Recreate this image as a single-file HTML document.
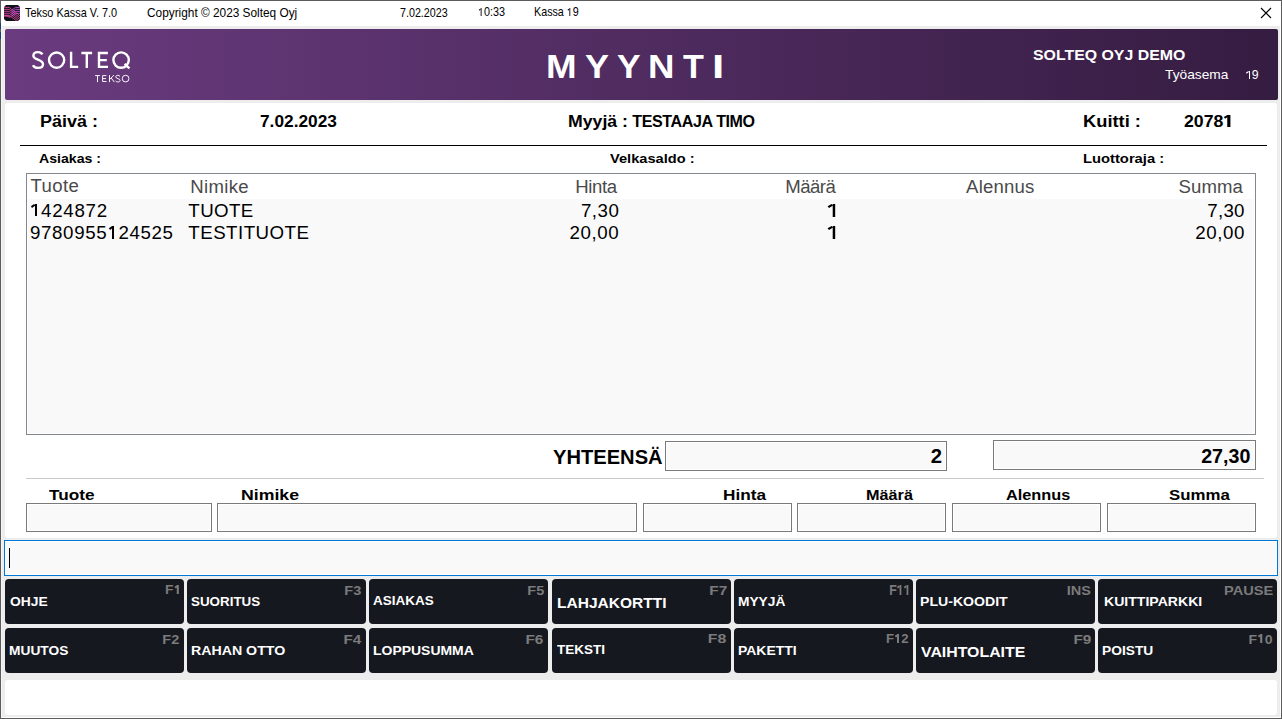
<!DOCTYPE html>
<html><head><meta charset="utf-8"><style>
html,body{margin:0;padding:0;width:1282px;height:719px;overflow:hidden;background:#fff}
.t{position:absolute;white-space:nowrap;line-height:1;font-family:"Liberation Sans",sans-serif;color:#000}
.o1{position:relative;-webkit-text-fill-color:transparent}
.o1::after{content:"";position:absolute;left:0.257em;width:0.096em;top:0.217em;height:0.688em;background:currentColor}
.o1::before{content:"";position:absolute;left:0.08em;width:0.205em;top:0.282em;height:0.09em;background:currentColor;transform:rotate(-35deg)}
.o1b{position:relative;-webkit-text-fill-color:transparent}
.o1b::after{content:"";position:absolute;left:0.222em;width:0.16em;top:0.217em;height:0.688em;background:currentColor}
.o1b::before{content:"";position:absolute;left:0.05em;width:0.21em;top:0.272em;height:0.115em;background:currentColor;transform:rotate(-33deg)}
</style></head><body>
<div style="position:absolute;left:0px;top:0px;width:1282px;height:719px;background:#fff;box-sizing:border-box;border:1px solid #5c5c5c;"></div>
<div style="position:absolute;left:0px;top:23px;width:1px;height:6px;background:#173d6e;"></div>
<div style="position:absolute;left:0px;top:32px;width:1px;height:7px;background:#173d6e;"></div>
<div style="position:absolute;left:1px;top:26px;width:1px;height:691px;background:#f5f5f5;"></div>
<div style="position:absolute;left:2px;top:26px;width:1278px;height:691px;background:#ededed;"></div>
<div style="position:absolute;left:5px;top:29px;width:1273px;height:71px;background:linear-gradient(to right,#6a3b7f,#351c41);border-radius:2px;"></div>
<div style="position:absolute;left:5px;top:103px;width:1272px;height:435px;background:#fff;border-radius:3px;"></div>
<div style="position:absolute;left:20px;top:145px;width:1247px;height:1px;background:#000;"></div>
<div style="position:absolute;left:26px;top:173px;width:1230px;height:262px;background:#f9f9f9;box-sizing:border-box;border:1px solid #828790;box-shadow:inset 0 0 0 1px #fff;"></div>
<div style="position:absolute;left:27px;top:174px;width:1228px;height:25px;background:#fff;"></div>
<div style="position:absolute;left:665px;top:441px;width:282px;height:30px;background:#f9f9f9;box-sizing:border-box;border:1px solid #7a7a7a;box-shadow:inset 0 0 0 1px #fff;"></div>
<div style="position:absolute;left:993px;top:440px;width:263px;height:30px;background:#f9f9f9;box-sizing:border-box;border:1px solid #7a7a7a;box-shadow:inset 0 0 0 1px #fff;"></div>
<div style="position:absolute;left:26px;top:478px;width:1238px;height:1px;background:#c8c8c8;"></div>
<div style="position:absolute;left:26px;top:503px;width:186px;height:29px;background:#f9f9f9;box-sizing:border-box;border:1px solid #7a7a7a;box-shadow:inset 0 0 0 1px #fff;"></div>
<div style="position:absolute;left:217px;top:503px;width:420px;height:29px;background:#f9f9f9;box-sizing:border-box;border:1px solid #7a7a7a;box-shadow:inset 0 0 0 1px #fff;"></div>
<div style="position:absolute;left:643px;top:503px;width:149px;height:29px;background:#f9f9f9;box-sizing:border-box;border:1px solid #7a7a7a;box-shadow:inset 0 0 0 1px #fff;"></div>
<div style="position:absolute;left:797px;top:503px;width:149px;height:29px;background:#f9f9f9;box-sizing:border-box;border:1px solid #7a7a7a;box-shadow:inset 0 0 0 1px #fff;"></div>
<div style="position:absolute;left:952px;top:503px;width:149px;height:29px;background:#f9f9f9;box-sizing:border-box;border:1px solid #7a7a7a;box-shadow:inset 0 0 0 1px #fff;"></div>
<div style="position:absolute;left:1107px;top:503px;width:149px;height:29px;background:#f9f9f9;box-sizing:border-box;border:1px solid #7a7a7a;box-shadow:inset 0 0 0 1px #fff;"></div>
<div style="position:absolute;left:4px;top:540px;width:1274px;height:36px;background:#f9f9f9;box-sizing:border-box;border:1px solid #0078d7;box-shadow:inset 0 0 0 1px #fff;"></div>
<div style="position:absolute;left:9px;top:548px;width:1px;height:20px;background:#000;"></div>
<div style="position:absolute;left:5px;top:579px;width:179px;height:45px;background:#161820;border-radius:4px;"></div>
<div style="position:absolute;left:187px;top:579px;width:179px;height:45px;background:#161820;border-radius:4px;"></div>
<div style="position:absolute;left:369px;top:579px;width:179px;height:45px;background:#161820;border-radius:4px;"></div>
<div style="position:absolute;left:552px;top:579px;width:179px;height:45px;background:#161820;border-radius:4px;"></div>
<div style="position:absolute;left:734px;top:579px;width:179px;height:45px;background:#161820;border-radius:4px;"></div>
<div style="position:absolute;left:916px;top:579px;width:179px;height:45px;background:#161820;border-radius:4px;"></div>
<div style="position:absolute;left:1098px;top:579px;width:179px;height:45px;background:#161820;border-radius:4px;"></div>
<div style="position:absolute;left:5px;top:628px;width:179px;height:45px;background:#161820;border-radius:4px;"></div>
<div style="position:absolute;left:187px;top:628px;width:179px;height:45px;background:#161820;border-radius:4px;"></div>
<div style="position:absolute;left:369px;top:628px;width:179px;height:45px;background:#161820;border-radius:4px;"></div>
<div style="position:absolute;left:552px;top:628px;width:179px;height:45px;background:#161820;border-radius:4px;"></div>
<div style="position:absolute;left:734px;top:628px;width:179px;height:45px;background:#161820;border-radius:4px;"></div>
<div style="position:absolute;left:916px;top:628px;width:179px;height:45px;background:#161820;border-radius:4px;"></div>
<div style="position:absolute;left:1098px;top:628px;width:179px;height:45px;background:#161820;border-radius:4px;"></div>
<div style="position:absolute;left:5px;top:680px;width:1272px;height:35px;background:#fff;border-radius:3px;"></div>
<svg style="position:absolute;left:4px;top:5px" width="16" height="16" viewBox="0 0 16 16">
<defs><clipPath id="ic"><path d="M2 0 H14 L16 2 V14 L14 16 H2 L0 14 V2 Z"/></clipPath></defs>
<path d="M2 0 H14 L16 2 V14 L14 16 H2 L0 14 V2 Z" fill="#101218"/>
<g fill="none" stroke-width="0.85" clip-path="url(#ic)">
<path d="M-1 2.40 H5.2 L17 11.60" stroke="#e24ca6"/>
<path d="M-1 4.35 H5.2 L17 13.55" stroke="#e24ca6"/>
<path d="M-1 6.30 H5.2 L17 15.50" stroke="#e24ca6"/>
<path d="M-1 8.25 H5.2 L17 17.45" stroke="#e24ca6"/>
<path d="M-1 10.20 H5.2 L17 19.40" stroke="#e24ca6"/>
<path d="M17 2.40 H11.5 L7.5 5.40" stroke="#cf55e2"/>
<path d="M17 4.35 H11.5 L7.5 7.35" stroke="#cf55e2"/>
<path d="M17 6.30 H11.5 L7.5 9.30" stroke="#cf55e2"/>
<path d="M17 8.25 H11.5 L7.5 11.25" stroke="#cf55e2"/>
<path d="M-1 11 C2 10.6 4.5 11 6.5 12.2" stroke="#e24ca6" stroke-width="1.6" opacity="0.7"/>
</g>
</svg>
<svg style="position:absolute;left:1260px;top:7px" width="12" height="12" viewBox="0 0 12 12"><path d="M1 1L11 11M11 1L1 11" stroke="#000" stroke-width="1.1" fill="none"/></svg>
<svg style="position:absolute;left:30px;top:49px" width="104" height="36" viewBox="30 49 104 36">
<g fill="none" stroke="#fff" stroke-width="2.4">
<path d="M42.4 54.3 C41.5 52.8 39.9 52.1 38 52.1 C35.3 52.1 33.4 53.5 33.4 55.7 C33.4 60.4 43 58.7 43 64.2 C43 66.6 40.9 67.9 38.1 67.9 C35.6 67.9 33.8 66.9 33 65.2"/>
<circle cx="56.6" cy="60.1" r="7.6"/>
<path d="M71.1 51.8 V66.9 H78.2"/>
<path d="M81.4 53 H92.1 M86.8 53 V68"/>
<path d="M107.9 53 H99 V66.9 H108 M99 60.1 H106.8"/>
<circle cx="121.1" cy="60.1" r="7.7"/>
<path d="M124.6 63.8 L129.4 68.3"/>
</g>
<g fill="none" stroke="#fff" stroke-width="0.95">
<path d="M95.1 75.6 H99.9 M97.5 75.6 V82.1"/>
<path d="M106.4 75.6 H102.6 V81.5 H106.5 M102.6 78.6 H106"/>
<path d="M109.5 75.1 V82.1 M114 75.1 L109.7 79.4 M111.2 78 L114.3 82.1"/>
<path d="M120 76.5 C119.5 75.7 118.7 75.3 117.8 75.3 C116.6 75.3 115.8 76 115.8 76.9 C115.8 79.1 120.1 78.2 120.1 80.4 C120.1 81.4 119.2 82 117.9 82 C116.8 82 115.9 81.5 115.5 80.7"/>
<circle cx="125.6" cy="78.6" r="3.35"/>
</g>
</svg>
<span class="t" style="font-size:12.150px;top:6.644px;left:24.72px;transform:scaleX(0.8961);transform-origin:left;">Tekso Kassa V. 7.0</span>
<span class="t" style="font-size:12.150px;top:6.926px;left:147.22px;transform:scaleX(0.9752);transform-origin:left;">Copyright © 2023 Solteq Oyj</span>
<span class="t" style="font-size:12.150px;top:7.314px;left:399.68px;transform:scaleX(0.8830);transform-origin:left;">7.02.2023</span>
<span class="t" style="font-size:12.150px;top:6.455px;left:477.57px;transform:scaleX(0.8897);transform-origin:left;"><span class="o1">1</span>0:33</span>
<span class="t" style="font-size:12.150px;top:6.483px;left:534.43px;transform:scaleX(0.8845);transform-origin:left;">Kassa <span class="o1">1</span>9</span>
<span class="t" style="font-size:32.998px;top:49.944px;left:546.02px;font-weight:700;color:#fff;transform:scaleX(1.1139);transform-origin:left;">M</span>
<span class="t" style="font-size:32.998px;top:49.944px;left:585.39px;font-weight:700;color:#fff;transform:scaleX(1.0900);transform-origin:left;">Y</span>
<span class="t" style="font-size:32.998px;top:49.944px;left:617.38px;font-weight:700;color:#fff;transform:scaleX(1.0714);transform-origin:left;">Y</span>
<span class="t" style="font-size:32.998px;top:49.944px;left:648.32px;font-weight:700;color:#fff;transform:scaleX(1.1109);transform-origin:left;">N</span>
<span class="t" style="font-size:32.998px;top:49.944px;left:683.13px;font-weight:700;color:#fff;transform:scaleX(1.0350);transform-origin:left;">T</span>
<span class="t" style="font-size:32.998px;top:49.944px;left:711.94px;font-weight:700;color:#fff;transform:scaleX(1.3400);transform-origin:left;">I</span>
<span class="t" style="font-size:14.907px;top:48.267px;left:1032.68px;font-weight:700;color:#fff;transform:scaleX(1.0663);transform-origin:left;">SOLTEQ OYJ DEMO</span>
<span class="t" style="font-size:12.290px;top:69.090px;left:1165.30px;color:#fff;transform:scaleX(1.1205);transform-origin:left;">Työasema</span>
<span class="t" style="font-size:12.290px;top:69.267px;letter-spacing:-0.400px;left:1245.39px;color:#fff;"><span class="o1">1</span>9</span>
<span class="t" style="font-size:16.760px;top:113.813px;left:39.58px;font-weight:700;transform:scaleX(1.0720);transform-origin:left;">Päivä :</span>
<span class="t" style="font-size:16.760px;top:113.813px;left:260.26px;font-weight:700;transform:scaleX(1.0315);transform-origin:left;">7.02.2023</span>
<span class="t" style="font-size:16.060px;top:113.404px;left:567.80px;font-weight:700;transform:scaleX(1.1019);transform-origin:left;">Myyjä :</span>
<span class="t" style="font-size:16.060px;top:113.388px;letter-spacing:-0.400px;left:632.37px;font-weight:700;">TESTAAJA TIMO</span>
<span class="t" style="font-size:16.760px;top:113.813px;left:1083.44px;font-weight:700;transform:scaleX(1.0918);transform-origin:left;">Kuitti :</span>
<span class="t" style="font-size:16.760px;top:113.813px;left:1184.26px;font-weight:700;transform:scaleX(1.0550);transform-origin:left;">2078<span class="o1b">1</span></span>
<span class="t" style="font-size:12.150px;top:153.199px;left:39.19px;font-weight:700;transform:scaleX(1.1633);transform-origin:left;">Asiakas :</span>
<span class="t" style="font-size:12.150px;top:153.414px;left:609.82px;font-weight:700;transform:scaleX(1.2043);transform-origin:left;">Velkasaldo :</span>
<span class="t" style="font-size:12.150px;top:153.414px;left:1083.29px;font-weight:700;transform:scaleX(1.2154);transform-origin:left;">Luottoraja :</span>
<span class="t" style="font-size:18.580px;top:177.441px;letter-spacing:0.376px;left:30.59px;color:#4a4a4a;">Tuote</span>
<span class="t" style="font-size:18.580px;top:177.645px;letter-spacing:0.300px;left:190.35px;color:#4a4a4a;">Nimike</span>
<span class="t" style="font-size:18.580px;top:177.645px;letter-spacing:-0.400px;left:575.27px;color:#4a4a4a;">Hinta</span>
<span class="t" style="font-size:18.580px;top:177.645px;letter-spacing:-0.550px;left:785.35px;color:#4a4a4a;">Määrä</span>
<span class="t" style="font-size:18.580px;top:177.660px;letter-spacing:0.192px;left:966.08px;color:#4a4a4a;">Alennus</span>
<span class="t" style="font-size:18.580px;top:177.641px;letter-spacing:0.106px;left:1178.47px;color:#4a4a4a;">Summa</span>
<span class="t" style="font-size:18.720px;top:201.530px;letter-spacing:0.734px;left:29.91px;"><span class="o1">1</span>424872</span>
<span class="t" style="font-size:18.720px;top:201.558px;letter-spacing:0.375px;left:188.34px;">TUOTE</span>
<span class="t" style="font-size:18.720px;top:201.518px;letter-spacing:0.467px;right:662.72px;">7,30</span>
<span class="t" style="font-size:18.720px;top:201.656px;right:442.29px;transform:scaleX(1.2385);transform-origin:right;"><span class="o1">1</span></span>
<span class="t" style="font-size:18.720px;top:201.593px;letter-spacing:0.300px;right:37.19px;">7,30</span>
<span class="t" style="font-size:18.720px;top:223.597px;letter-spacing:0.651px;left:29.95px;">9780955<span class="o1">1</span>24525</span>
<span class="t" style="font-size:18.720px;top:223.558px;letter-spacing:0.472px;left:188.34px;">TESTITUOTE</span>
<span class="t" style="font-size:18.720px;top:223.569px;letter-spacing:0.625px;right:662.62px;">20,00</span>
<span class="t" style="font-size:18.720px;top:223.656px;right:442.29px;transform:scaleX(1.2385);transform-origin:right;"><span class="o1">1</span></span>
<span class="t" style="font-size:18.720px;top:223.593px;letter-spacing:0.625px;right:36.86px;">20,00</span>
<span class="t" style="font-size:19.550px;top:448.448px;left:552.84px;font-weight:700;transform:scaleX(1.0305);transform-origin:left;">YHTEENSÄ</span>
<span class="t" style="font-size:20.250px;top:446.057px;right:340.11px;font-weight:700;">2</span>
<span class="t" style="font-size:20.110px;top:445.575px;right:31.52px;font-weight:700;transform:scaleX(0.9768);transform-origin:right;">27,30</span>
<span class="t" style="font-size:14.604px;top:488.132px;left:49.04px;font-weight:700;transform:scaleX(1.1789);transform-origin:left;">Tuote</span>
<span class="t" style="font-size:14.604px;top:488.132px;left:240.74px;font-weight:700;transform:scaleX(1.2133);transform-origin:left;">Nimike</span>
<span class="t" style="font-size:14.604px;top:488.132px;left:723.16px;font-weight:700;transform:scaleX(1.1781);transform-origin:left;">Hinta</span>
<span class="t" style="font-size:14.604px;top:488.132px;left:865.59px;font-weight:700;transform:scaleX(1.1122);transform-origin:left;">Määrä</span>
<span class="t" style="font-size:14.604px;top:488.132px;left:1005.62px;font-weight:700;transform:scaleX(1.1161);transform-origin:left;">Alennus</span>
<span class="t" style="font-size:14.604px;top:488.132px;left:1168.98px;font-weight:700;transform:scaleX(1.1519);transform-origin:left;">Summa</span>
<span class="t" style="font-size:12.150px;top:595.897px;left:10.07px;font-weight:700;color:#fff;transform:scaleX(1.1406);transform-origin:left;">OHJE</span>
<span class="t" style="font-size:13.130px;top:583.461px;right:1100.65px;font-weight:700;color:#7b7b7b;transform:scaleX(1.0589);transform-origin:right;">F<span class="o1b">1</span></span>
<span class="t" style="font-size:12.150px;top:595.755px;left:191.41px;font-weight:700;color:#fff;transform:scaleX(1.1032);transform-origin:left;">SUORITUS</span>
<span class="t" style="font-size:13.130px;top:583.587px;right:920.40px;font-weight:700;color:#7b7b7b;transform:scaleX(1.1071);transform-origin:right;">F3</span>
<span class="t" style="font-size:12.150px;top:595.426px;left:373.48px;font-weight:700;color:#fff;transform:scaleX(1.1111);transform-origin:left;">ASIAKAS</span>
<span class="t" style="font-size:13.130px;top:583.587px;right:738.11px;font-weight:700;color:#7b7b7b;transform:scaleX(1.1071);transform-origin:right;">F5</span>
<span class="t" style="font-size:14.907px;top:596.069px;left:556.72px;font-weight:700;color:#fff;transform:scaleX(1.0422);transform-origin:left;">LAHJAKORTTI</span>
<span class="t" style="font-size:13.130px;top:583.587px;right:555.15px;font-weight:700;color:#7b7b7b;transform:scaleX(1.1736);transform-origin:right;">F7</span>
<span class="t" style="font-size:12.150px;top:595.567px;left:738.39px;font-weight:700;color:#fff;transform:scaleX(1.1317);transform-origin:left;">MYYJÄ</span>
<span class="t" style="font-size:14.247px;top:583.163px;right:371.65px;font-weight:700;color:#7b7b7b;transform:scaleX(0.8712);transform-origin:right;">F<span class="o1b">1</span><span class="o1b">1</span></span>
<span class="t" style="font-size:12.150px;top:596.226px;left:920.39px;font-weight:700;color:#fff;transform:scaleX(1.1613);transform-origin:left;">PLU-KOODIT</span>
<span class="t" style="font-size:13.130px;top:583.587px;right:191.51px;font-weight:700;color:#7b7b7b;transform:scaleX(1.1048);transform-origin:right;">INS</span>
<span class="t" style="font-size:12.150px;top:596.226px;left:1104.49px;font-weight:700;color:#fff;transform:scaleX(1.1590);transform-origin:left;">KUITTIPARKKI</span>
<span class="t" style="font-size:13.130px;top:583.587px;right:9.18px;font-weight:700;color:#7b7b7b;transform:scaleX(1.1116);transform-origin:right;">PAUSE</span>
<span class="t" style="font-size:12.150px;top:644.567px;left:9.39px;font-weight:700;color:#fff;transform:scaleX(1.1332);transform-origin:left;">MUUTOS</span>
<span class="t" style="font-size:13.130px;top:632.587px;right:1102.21px;font-weight:700;color:#7b7b7b;transform:scaleX(1.1071);transform-origin:right;">F2</span>
<span class="t" style="font-size:12.150px;top:645.273px;left:191.34px;font-weight:700;color:#fff;transform:scaleX(1.1675);transform-origin:left;">RAHAN OTTO</span>
<span class="t" style="font-size:13.130px;top:632.579px;right:921.15px;font-weight:700;color:#7b7b7b;transform:scaleX(1.1614);transform-origin:right;">F4</span>
<span class="t" style="font-size:12.150px;top:645.179px;left:373.39px;font-weight:700;color:#fff;transform:scaleX(1.1494);transform-origin:left;">LOPPUSUMMA</span>
<span class="t" style="font-size:13.130px;top:632.587px;right:738.58px;font-weight:700;color:#7b7b7b;transform:scaleX(1.1703);transform-origin:right;">F6</span>
<span class="t" style="font-size:12.150px;top:644.426px;left:557.34px;font-weight:700;color:#fff;transform:scaleX(1.1119);transform-origin:left;">TEKSTI</span>
<span class="t" style="font-size:13.130px;top:632.493px;right:555.40px;font-weight:700;color:#7b7b7b;transform:scaleX(1.2071);transform-origin:right;">F8</span>
<span class="t" style="font-size:12.150px;top:644.944px;left:738.39px;font-weight:700;color:#fff;transform:scaleX(1.1480);transform-origin:left;">PAKETTI</span>
<span class="t" style="font-size:13.130px;top:632.022px;right:373.41px;font-weight:700;color:#7b7b7b;">F<span class="o1b">1</span>2</span>
<span class="t" style="font-size:14.907px;top:645.159px;left:921.08px;font-weight:700;color:#fff;transform:scaleX(1.0651);transform-origin:left;">VAIHTOLAITE</span>
<span class="t" style="font-size:13.130px;top:632.587px;right:190.82px;font-weight:700;color:#7b7b7b;transform:scaleX(1.1688);transform-origin:right;">F9</span>
<span class="t" style="font-size:12.150px;top:644.614px;left:1102.39px;font-weight:700;color:#fff;transform:scaleX(1.1341);transform-origin:left;">POISTU</span>
<span class="t" style="font-size:13.130px;top:632.587px;right:9.68px;font-weight:700;color:#7b7b7b;transform:scaleX(1.0714);transform-origin:right;">F<span class="o1b">1</span>0</span>
</body></html>
